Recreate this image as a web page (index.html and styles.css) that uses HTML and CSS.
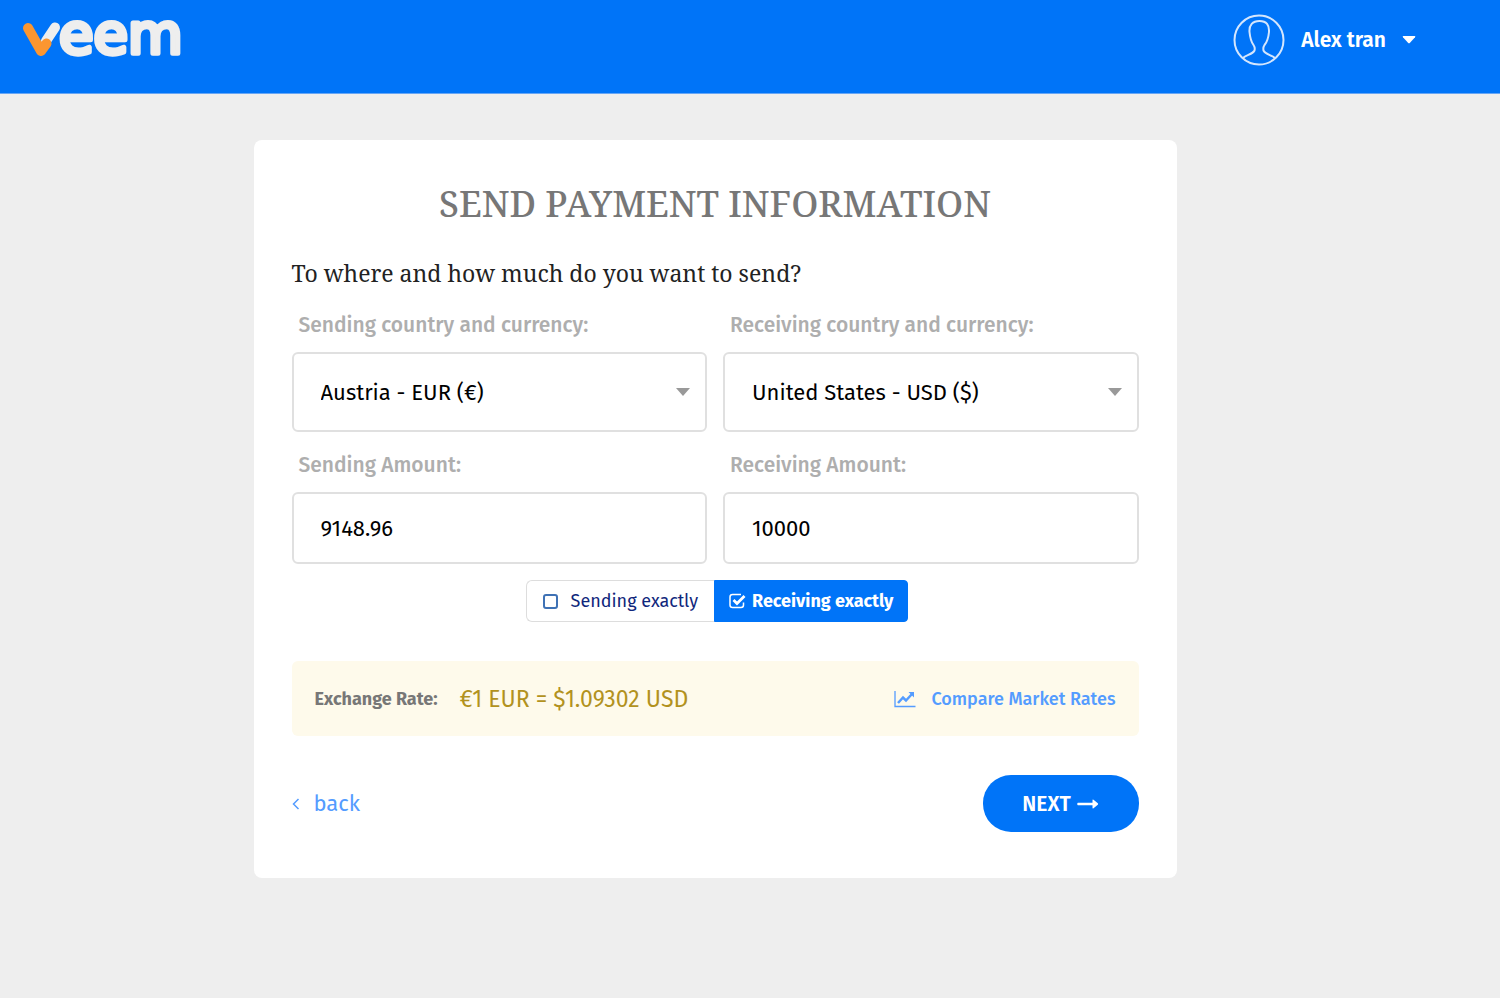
FILE: index.html
```html
<!DOCTYPE html>
<html lang="en">
<head>
<meta charset="utf-8">
<title>Veem - Send Payment Information</title>
<meta name="viewport" content="width=device-width, initial-scale=1">
<link rel="stylesheet" href="styles.css">
</head>
<body>
<header class="topbar">
  <a class="logo" href="#" aria-label="veem">
    <svg width="176" height="72" viewBox="0 -20 176 72">
      <path class="logo-light" d="M34 7.500 25 21"/>
      <path class="logo-orange" d="M7 8 20 31 25.500 23.500"/>
      <text class="logo-text" x="38" y="33">eem</text>
    </svg>
  </a>
  <button class="account" type="button">
    <svg class="avatar" width="52" height="52" viewBox="0 0 52 52">
      <circle cx="26" cy="26" r="24.500"/>
      <path d="M10 44C13 41 20 40 21.500 36.500C22.200 34 21.500 32.500 20.500 31C17.500 27 17 23 16.500 18C16 11 19.500 7 26.500 7C33.500 7 36.500 11 36 18C35.500 23 35 27 31.500 31C30.500 32.500 30 34 30.500 36.500C32 40 38 41 42 44"/>
    </svg>
    <span>Alex tran</span>
    <svg width="14" height="8" viewBox="0 0 14 8"><path d="M1.500 0h11q1.500 0 .5 1.200L8 6.800q-1 1-2 0L1 1.200q-1-1.200.5-1.200z" fill="#fff"/></svg>
  </button>
</header>

<main class="page">
  <form class="card">
    <h1 class="title">SEND PAYMENT INFORMATION</h1>
    <h2 class="question">To where and how much do you want to send?</h2>

    <div class="fields">
      <div class="field">
        <label for="send-country">Sending country and currency:</label>
        <div class="select">
          <select id="send-country"><option>Austria - EUR (€)</option></select>
          <svg class="arrow" width="14" height="8" viewBox="0 0 14 8"><path d="M0 0h14L7 8z"/></svg>
        </div>
      </div>
      <div class="field">
        <label for="recv-country">Receiving country and currency:</label>
        <div class="select">
          <select id="recv-country"><option>United States - USD ($)</option></select>
          <svg class="arrow" width="14" height="8" viewBox="0 0 14 8"><path d="M0 0h14L7 8z"/></svg>
        </div>
      </div>
      <div class="field">
        <label for="send-amount">Sending Amount:</label>
        <input class="amount" id="send-amount" type="text" value="9148.96">
      </div>
      <div class="field">
        <label for="recv-amount">Receiving Amount:</label>
        <input class="amount" id="recv-amount" type="text" value="10000">
      </div>
    </div>

    <div class="toggle">
      <label class="option" for="exact-send">
        <input id="exact-send" type="checkbox">
        <span>Sending exactly</span>
      </label>
      <label class="option option-on" for="exact-recv">
        <input id="exact-recv" type="checkbox" checked>
        <span>Receiving exactly</span>
      </label>
    </div>

    <div class="rate">
      <span class="rate-label">Exchange Rate:</span>
      <span class="rate-value">€1 EUR = $1.09302 USD</span>
      <a class="compare" href="#">
        <svg width="22" height="18" viewBox="0 0 22 18" fill="none" stroke="currentColor">
          <path d="M1 1v15.500h20.500" stroke-width="1.300"/>
          <path d="M4 13 9 7.500l3 3L18 4" stroke-width="2.500"/>
          <path d="M14.500 2H20v5.500z" fill="currentColor" stroke="none"/>
        </svg>
        <span>Compare Market Rates</span>
      </a>
    </div>

    <div class="actions">
      <a class="back" href="#">
        <svg width="8" height="12" viewBox="0 0 8 12" fill="none" stroke="currentColor" stroke-width="1.500"><path d="M6.500 1 1.500 6l5 5"/></svg>
        <span>back</span>
      </a>
      <button class="next" type="submit">
        <span>NEXT</span>
        <svg width="22" height="12" viewBox="0 0 22 12" fill="#fff"><path d="M1 4.700h14.500V2.200q0-1.200 1-.5l4.300 3.600q.8.700 0 1.400l-4.300 3.600q-1 .7-1-.5V7.300H1q-.7 0-.7-.7V5.400q0-.7.7-.7z"/></svg>
      </button>
    </div>
  </form>
</main>
</body>
</html>
```
FILE: styles.css
```css
* { box-sizing: border-box; }

body {
  margin: 0;
  min-height: 100vh;
  background: #eee;
  color: #000;
  font-family: "Fira Sans", "Noto Sans", sans-serif;
  font-size: 22px;
}

a { text-decoration: none; color: #549cff; }
button, input, select { font-family: inherit; }

.topbar {
  display: flex;
  justify-content: space-between;
  align-items: flex-start;
  height: 94px;
  padding: 0 84px 0 21px;
  background: #0074f8;
  border-bottom: 1px solid #67a6f5;
}

.logo svg { display: block; }
.logo path { fill: none; stroke-width: 10; stroke-linecap: round; stroke-linejoin: round; }
.logo .logo-light { stroke: #eee; }
.logo .logo-orange { stroke: #fb9630; }
.logo-text {
  font-family: "DejaVu Sans", sans-serif;
  font-size: 56px;
  fill: #eee;
  stroke: #eee;
  stroke-width: 5px;
  stroke-linejoin: round;
}

.account {
  display: flex;
  align-items: center;
  gap: 16px;
  margin-top: 14px;
  padding: 0;
  border: 0;
  background: none;
  color: #fff;
  font-size: 21px;
  font-weight: 600;
  cursor: pointer;
}
.avatar { fill: none; stroke: #d4e6fd; stroke-width: 2; }

.page { padding: 46px 70px 40px 0; }

.card {
  max-width: 923px;
  margin: 0 auto;
  padding: 38px 38px 46px;
  background: #fff;
  border-radius: 8px;
}

.title, .question {
  margin: 0;
  font-family: "Droid Serif", "Noto Serif", "DejaVu Serif Condensed", serif;
  font-weight: 400;
}
.title {
  color: #777;
  font-size: 36px;
  font-weight: 500;
  line-height: 52px;
  text-align: center;
}
.question {
  margin-top: 26px;
  color: #222;
  font-size: 23px;
  line-height: 34px;
}

.fields {
  display: grid;
  grid-template-columns: 1fr 1fr;
  gap: 16px;
  margin-top: 18px;
}
.field label {
  display: block;
  padding-left: 7px;
  color: #aeaeae;
  font-size: 21px;
  font-weight: 500;
  line-height: 34px;
}
.select { position: relative; margin-top: 10px; }
.select select, .amount {
  display: block;
  width: 100%;
  padding: 0 27px;
  border: 2px solid #e0e0e0;
  border-radius: 6px;
  background: #fff;
  color: #000;
  font-size: 22px;
}
.select select { height: 80px; appearance: none; }
.amount { height: 72px; margin-top: 10px; }
.arrow { position: absolute; top: 36px; right: 17px; fill: #999; pointer-events: none; }

.toggle { display: flex; justify-content: center; margin-top: 16px; padding-left: 4px; }
.option {
  display: flex;
  align-items: center;
  gap: 13px;
  height: 42px;
  padding: 0 16px;
  border: 1px solid #ddd;
  border-right: 0;
  border-radius: 6px 0 0 6px;
  color: #10277c;
  font-size: 18px;
}
.option input {
  appearance: none;
  width: 15px;
  height: 15px;
  margin: 0;
  border: 2px solid #3f72b5;
  border-radius: 3px;
}
.option-on {
  gap: 6px;
  padding: 0 14px;
  border: 1px solid #0074f8;
  border-radius: 0 4px 4px 0;
  background: #0074f8;
  color: #fff;
  font-weight: 700;
}
.option-on input {
  width: 17px;
  height: 16px;
  border: 0;
  border-radius: 0;
  background: url("data:image/svg+xml,%3Csvg xmlns='http://www.w3.org/2000/svg' viewBox='0 0 17 16' fill='none' stroke='white'%3E%3Cpath d='M12 1.500H3.500Q1 1.500 1 4v8q0 2.500 2.500 2.500h8.500q2.500 0 2.500-2.500V9.500' stroke-width='1.500'/%3E%3Cpath d='M4.500 7 8 10.500 15.500 3' stroke-width='2.800'/%3E%3C/svg%3E");
}

.rate {
  display: flex;
  align-items: center;
  min-height: 75px;
  margin-top: 39px;
  padding: 0 23px;
  border-radius: 6px;
  background: #fefaeb;
}
.rate-label { color: #777; font-size: 18px; font-weight: 700; }
.rate-value { margin-left: 22px; color: #b2921e; font-size: 23px; }
.compare {
  display: flex;
  align-items: center;
  gap: 15px;
  margin-left: auto;
  font-size: 18px;
  font-weight: 500;
}

.actions {
  display: flex;
  justify-content: space-between;
  align-items: center;
  margin-top: 39px;
}
.back { display: flex; align-items: center; gap: 14px; }
.next {
  display: flex;
  align-items: center;
  justify-content: center;
  gap: 6px;
  min-width: 156px;
  height: 57px;
  border: 0;
  border-radius: 28px;
  background: #0074f8;
  color: #fff;
  font-size: 21px;
  font-weight: 600;
  cursor: pointer;
}
```
